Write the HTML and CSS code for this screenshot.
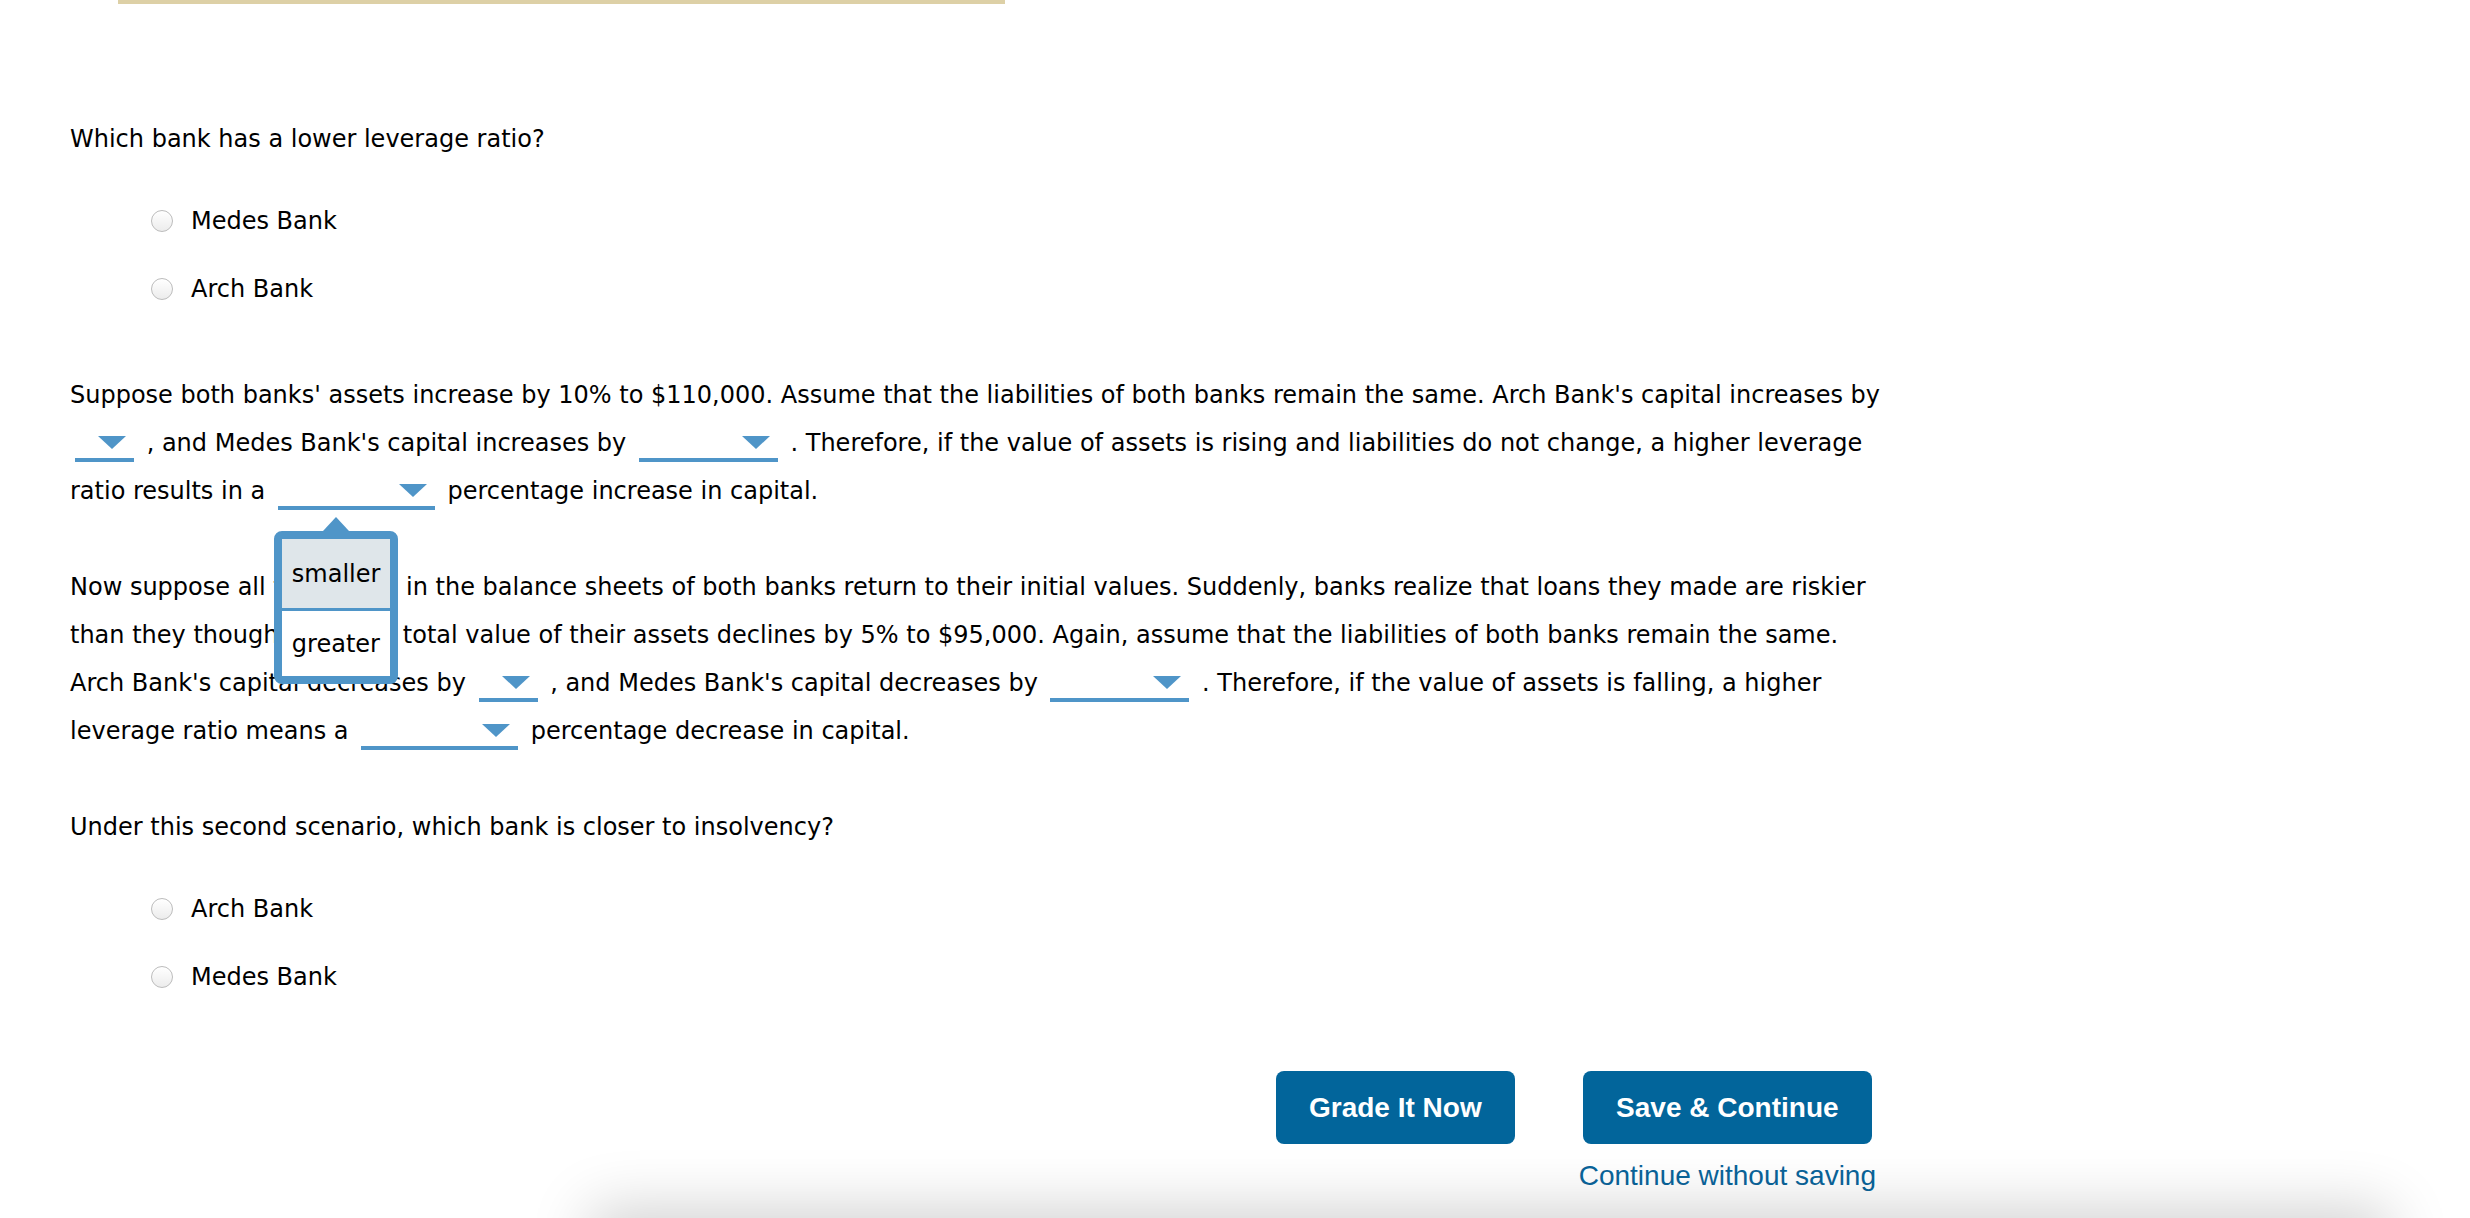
FILE: index.html
```html
<!DOCTYPE html>
<html lang="en">
<head>
<meta charset="utf-8">
<title>Leverage ratio question</title>
<link rel="stylesheet" href="styles.css">
</head>
<body>
<div class="topbar"></div>
<main class="content">
  <p class="question">Which bank has a lower leverage ratio?</p>
  <ul class="options">
    <li class="option"><span class="radio"></span><span>Medes Bank</span></li>
    <li class="option"><span class="radio"></span><span>Arch Bank</span></li>
  </ul>

  <p class="para first">Suppose both banks' assets increase by 10% to $110,000. Assume that the liabilities of both banks remain the same. Arch Bank's capital increases by<br><span class="dd dd-s"></span> , and Medes Bank's capital increases by <span class="dd dd-m"></span> . Therefore, if the value of assets is rising and liabilities do not change, a higher leverage<br>ratio results in a <span class="dd dd-l"><span class="menu"><span class="menu-item active">smaller</span><span class="menu-item">greater</span></span></span> percentage increase in capital.</p>

  <p class="para">Now suppose all the values in the balance sheets of both banks return to their initial values. Suddenly, banks realize that loans they made are riskier<br>than they thought, and the total value of their assets declines by 5% to $95,000. Again, assume that the liabilities of both banks remain the same.<br>Arch Bank's capital decreases by <span class="dd dd-s"></span> , and Medes Bank's capital decreases by <span class="dd dd-m"></span> . Therefore, if the value of assets is falling, a higher<br>leverage ratio means a <span class="dd dd-l"></span> percentage decrease in capital.</p>

  <p class="para">Under this second scenario, which bank is closer to insolvency?</p>
  <ul class="options">
    <li class="option"><span class="radio"></span><span>Arch Bank</span></li>
    <li class="option"><span class="radio"></span><span>Medes Bank</span></li>
  </ul>

  <div class="actions">
    <button class="btn" type="button">Grade It Now</button>
    <div class="save-col">
      <button class="btn" type="button">Save &amp; Continue</button>
      <a class="link" href="#">Continue without saving</a>
    </div>
  </div>
</main>
<div class="dock"></div>
</body>
</html>
```
FILE: styles.css
```css
html, body {
  margin: 0;
  padding: 0;
  background: #fff;
}
body {
  font-family: "DejaVu Sans", Verdana, sans-serif;
  font-size: 24px;
  color: #000;
  overflow: hidden;
}
.topbar {
  margin-left: 118px;
  width: 887px;
  height: 4px;
  background: #ddd0a6;
}
.content {
  padding-left: 70px;
  width: 1870px;
}
.question {
  margin: 111px 0 0;
  line-height: 48px;
}
.options {
  list-style: none;
  margin: 34px 0 0;
  padding: 0 0 0 81px;
  display: flex;
  flex-direction: column;
  gap: 20px;
}
.option {
  display: flex;
  align-items: center;
  height: 48px;
  gap: 18px;
}
.radio {
  width: 22px;
  height: 22px;
  box-sizing: border-box;
  border-radius: 50%;
  border: 1px solid #bcbcbc;
  background: linear-gradient(#ffffff, #ececec);
  box-shadow: inset 0 1px 1px rgba(255,255,255,0.9);
}
.para {
  margin: 48px 0 0;
  line-height: 48px;
}
.para.first {
  margin-top: 58px;
}
.dd {
  display: inline-block;
  position: relative;
  box-sizing: border-box;
  height: 26px;
  border-bottom: 4px solid #4f95c8;
  margin: 0 5px;
  vertical-align: -11px;
}
.dd::after {
  content: "";
  position: absolute;
  top: 0;
  right: 8px;
  width: 0;
  height: 0;
  border-left: 14px solid transparent;
  border-right: 14px solid transparent;
  border-top: 13px solid #4f95c8;
}
.dd-s { width: 59px; }
.dd-m { width: 139px; }
.dd-l { width: 157px; }
.menu {
  position: absolute;
  left: -4px;
  top: 47px;
  z-index: 5;
  width: 124px;
  box-sizing: border-box;
  border: 8px solid #4f95c8;
  border-radius: 8px;
  background: #fff;
  display: flex;
  flex-direction: column;
  line-height: 1;
}
.menu::before {
  content: "";
  position: absolute;
  top: -22px;
  left: 50%;
  margin-left: -13px;
  width: 0;
  height: 0;
  border-left: 13px solid transparent;
  border-right: 13px solid transparent;
  border-bottom: 14px solid #4f95c8;
}
.menu-item {
  display: flex;
  align-items: center;
  height: 65px;
  padding-left: 10px;
  background: #fff;
}
.menu-item.active {
  height: 69px;
  background: #dfe6ea;
  border-bottom: 3px solid #4f95c8;
}
.actions {
  display: flex;
  justify-content: flex-end;
  align-items: flex-start;
  gap: 64px;
  margin-top: 70px;
  padding-right: 64px;
}
.btn {
  background: #02659b;
  color: #fff;
  font-family: "Liberation Sans", Arial, sans-serif;
  font-weight: bold;
  font-size: 28px;
  line-height: 33px;
  padding: 20px 33px;
  border: none;
  border-radius: 8px;
}
.save-col {
  display: flex;
  flex-direction: column;
  align-items: center;
  gap: 16px;
}
.link {
  color: #0a649a;
  font-family: "Liberation Sans", Arial, sans-serif;
  font-size: 28px;
  line-height: 32px;
  text-decoration: none;
}
.dock {
  position: fixed;
  left: 600px;
  width: 1780px;
  bottom: -60px;
  height: 60px;
  background: #fff;
  box-shadow: 0 0 60px 10px rgba(0,0,0,0.18);
}
```
